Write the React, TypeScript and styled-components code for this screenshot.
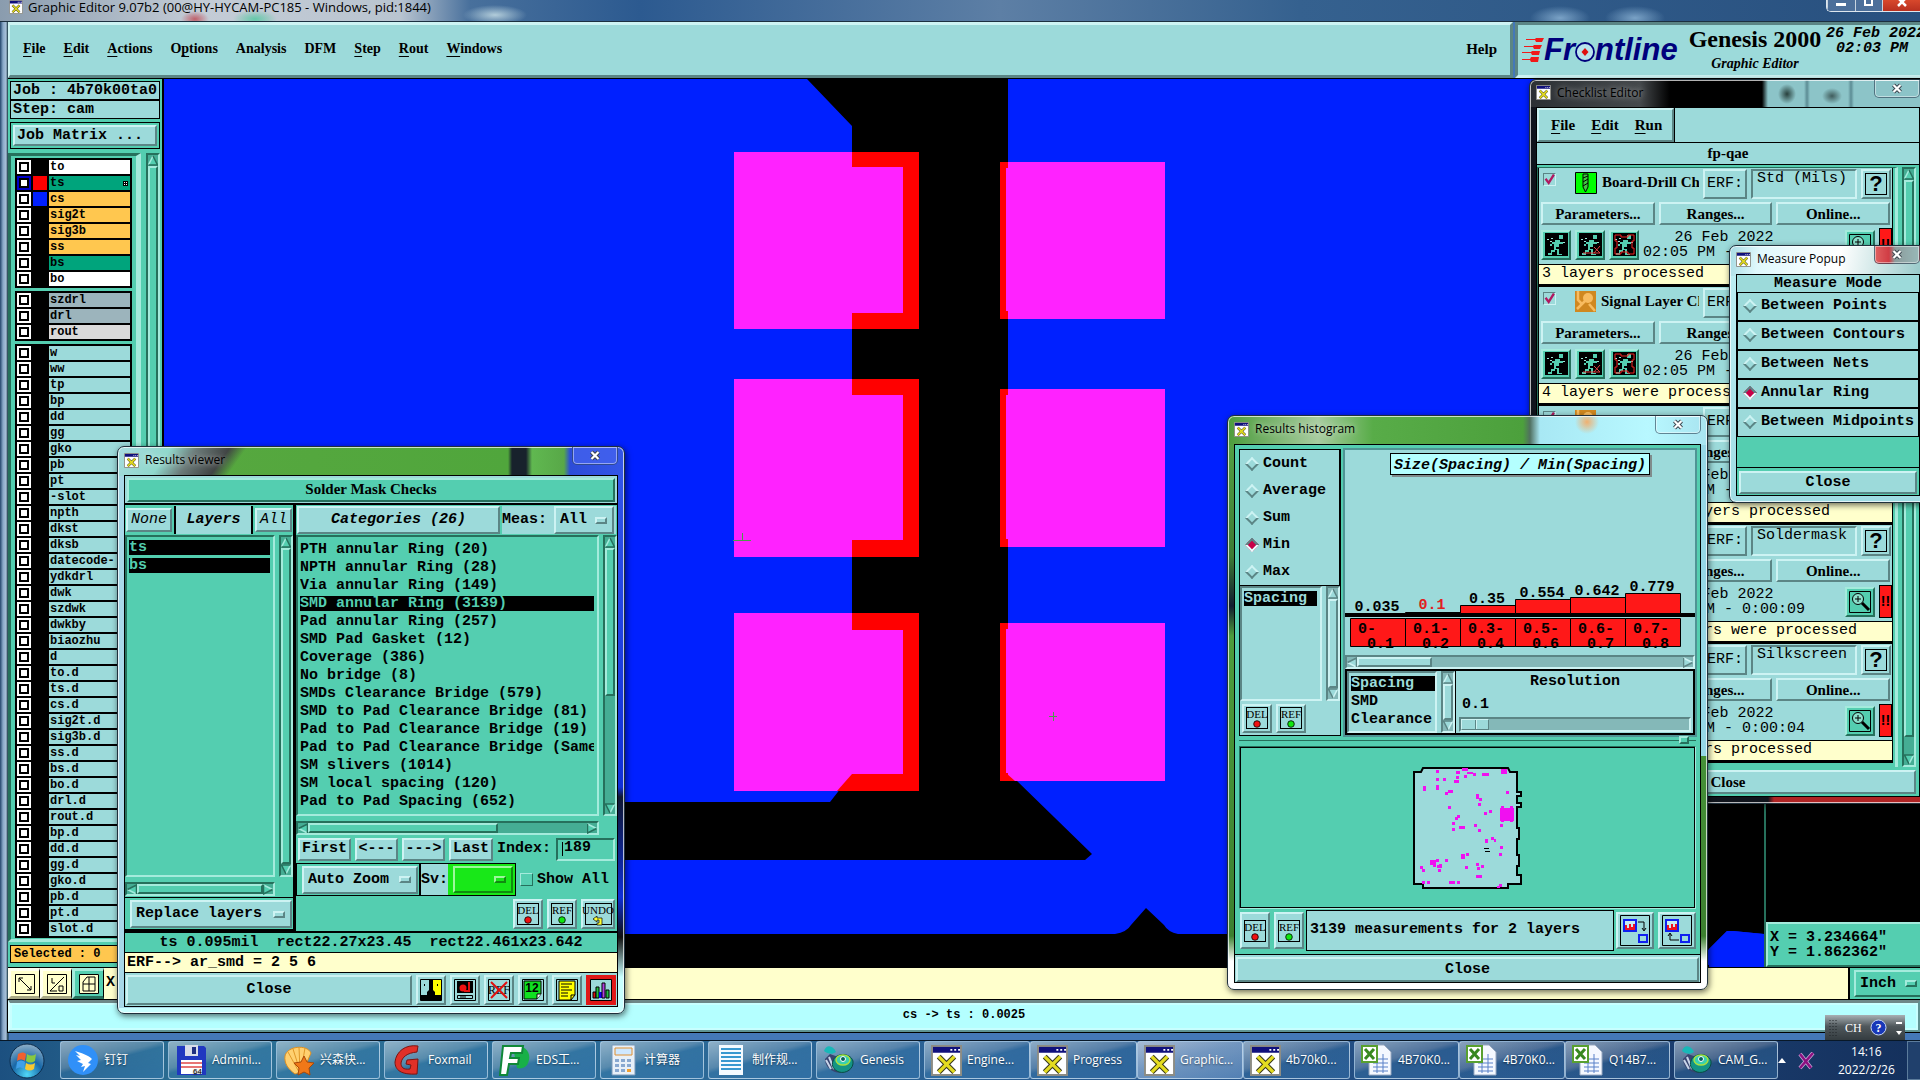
import React from "react";
import styled, { createGlobalStyle, css } from "styled-components";

const MONO = `"Liberation Mono", "Courier New", monospace`;
const SERIF = `"Liberation Serif", "Times New Roman", serif`;
const UI = `"Open Sans", "Noto Sans CJK SC", sans-serif`;

type ToneName = "cyan" | "teal" | "cream" | "green" | "pale";
const tones: Record<ToneName, { bg: string; hi: string; lo: string; trough: string }> = {
  cyan: { bg: "#9cdada", hi: "#cdf3f3", lo: "#5b8585", trough: "#84b8b8" },
  teal: { bg: "#54ceb0", hi: "#a4ebdc", lo: "#26705c", trough: "#45ad94" },
  cream: { bg: "#ffffcc", hi: "#fffff0", lo: "#a8a884", trough: "#d8d8a8" },
  green: { bg: "#18e818", hi: "#9cf89c", lo: "#108c10", trough: "#18c018" },
  pale: { bg: "#b4ffff", hi: "#dcffff", lo: "#5f9494", trough: "#98d8d8" },
};

const raised = (t: ToneName, w = 2) => css`
  background: ${tones[t].bg};
  border: ${w}px solid;
  border-color: ${tones[t].hi} ${tones[t].lo} ${tones[t].lo} ${tones[t].hi};
`;
const sunken = (t: ToneName, w = 2) => css`
  background: ${tones[t].bg};
  border: ${w}px solid;
  border-color: ${tones[t].lo} ${tones[t].hi} ${tones[t].hi} ${tones[t].lo};
`;

const Global = createGlobalStyle`
  *, *::before, *::after { box-sizing: border-box; }
  html, body { margin: 0; padding: 0; overflow: hidden; background: #1d4f86; }
  body { font: bold 15px/18px ${MONO}; color: #000; }
  button, input, select { font: inherit; color: inherit; margin: 0; padding: 0; border-radius: 0; appearance: none; outline: none; }
  ul { list-style: none; margin: 0; padding: 0; }
  h1, h2, p { margin: 0; font: inherit; }
  svg { display: block; flex: none; }
`;

const Desktop = styled.div`
  position: relative;
  height: 100vh;
  display: flex;
  flex-direction: column;
  overflow: hidden;
`;

/* ---------- shared widgets ---------- */
const Btn = styled.button<{ $tone?: ToneName; $w?: number; $h?: number; $italic?: boolean; $serif?: boolean; $plain?: boolean; $grow?: boolean }>`
  ${(p) => raised(p.$tone ?? "cyan")}
  display: flex;
  align-items: center;
  justify-content: center;
  flex: ${(p) => (p.$grow ? "1 1 0" : "none")};
  min-width: 0;
  width: ${(p) => (p.$w ? `${p.$w}px` : "auto")};
  height: ${(p) => (p.$h ? `${p.$h}px` : "auto")};
  font-family: ${(p) => (p.$serif ? SERIF : MONO)};
  font-style: ${(p) => (p.$italic ? "italic" : "normal")};
  font-weight: ${(p) => (p.$plain ? "normal" : "bold")};
  white-space: nowrap;
  overflow: hidden;
`;

const MenuWrap = styled.label<{ $tone: ToneName; $grow?: boolean; $w?: number; $h: number }>`
  ${(p) => raised(p.$tone)}
  display: flex;
  align-items: center;
  gap: 4px;
  padding: 0 5px 0 4px;
  height: ${(p) => p.$h}px;
  width: ${(p) => (p.$w ? `${p.$w}px` : "auto")};
  flex: ${(p) => (p.$grow ? "1 1 0" : "none")};
  select { flex: 1; min-width: 0; border: 0; background: transparent; }
`;
const Tab = styled.span<{ $tone: ToneName }>`
  ${(p) => raised(p.$tone)}
  width: 12px;
  height: 7px;
  flex: none;
`;
const OptionMenu = ({ value, name, tone = "cyan", h, w, grow }: { value: string; name: string; tone?: ToneName; h: number; w?: number; grow?: boolean }) => (
  <MenuWrap $tone={tone} $h={h} $w={w} $grow={grow}>
    <select aria-label={name} defaultValue={value}>
      <option>{value}</option>
    </select>
    <Tab $tone={tone} />
  </MenuWrap>
);

const Track = styled.div<{ $v: boolean; $tone: ToneName }>`
  ${(p) => sunken(p.$tone)}
  background: ${(p) => tones[p.$tone].trough};
  display: flex;
  flex: none;
  flex-direction: ${(p) => (p.$v ? "column" : "row")};
  width: ${(p) => (p.$v ? "14px" : "auto")};
  height: ${(p) => (p.$v ? "auto" : "14px")};
`;
const Rail = styled.div<{ $v: boolean }>`
  flex: 1;
  display: flex;
  flex-direction: ${(p) => (p.$v ? "column" : "row")};
`;
const Thumb = styled.div<{ $size: number; $tone: ToneName }>`
  ${(p) => raised(p.$tone)}
  flex: 0 0 ${(p) => p.$size}%;
`;
const Arrow = ({ turn, tone }: { turn: number; tone: ToneName }) => (
  <svg width="10" height="11" viewBox="0 0 10 11">
    <g transform={`rotate(${turn} 5 5.5)`}>
      <path d="M5 1 9.500 10H.5z" fill={tones[tone].bg} />
      <path d="M.5 10 5 1" stroke={tones[tone].hi} strokeWidth="1.500" />
      <path d="M5 1 9.500 10H.5" fill="none" stroke={tones[tone].lo} strokeWidth="1.500" />
    </g>
  </svg>
);
const Scroll = ({ v = true, size = 100, tone = "teal" }: { v?: boolean; size?: number; tone?: ToneName }) => (
  <Track $v={v} $tone={tone}>
    <Arrow turn={v ? 0 : -90} tone={tone} />
    <Rail $v={v}>
      <Thumb $size={size} $tone={tone} />
    </Rail>
    <Arrow turn={v ? 180 : 90} tone={tone} />
  </Track>
);

const Option = styled.label`
  display: flex;
  align-items: center;
  gap: 4px;
  white-space: nowrap;
`;
const Diamond = styled.input`
  width: 10px;
  height: 10px;
  margin: 0 2px;
  transform: rotate(45deg);
  background: #9cdada;
  border: 2px solid;
  border-color: #cdf3f3 #5b8585 #5b8585 #cdf3f3;
  &:checked { background: #c80048; border-color: #5b8585 #e8ffff #e8ffff #5b8585; }
`;

/* ---------- small drawings ---------- */
const XIcon = ({ s = 15 }: { s?: number }) => (
  <svg width={s} height={s} viewBox="0 0 16 16">
    <path d="M.5.5h15v15H.5z" fill="#fff" stroke="#8c8c84" />
    <path d="M1 1h14v3H1z" fill="#10107c" />
    <path d="M10 2h1v1h-1zM12 2h1v1h-1zM14 2h1v1h-1z" fill="#fff" />
    <path d="m4 6 8 8M12 6l-8 8" stroke="#38381c" strokeWidth="2.800" />
    <path d="m4 6 8 8M12 6l-8 8" stroke="#e4dc20" strokeWidth="1.700" />
  </svg>
);

const GlyphText = styled.span`
  font: 11px/12px ${SERIF};
  height: 12px;
`;
const GlyphFrame = styled.span<{ $wide?: boolean }>`
  display: flex;
  flex-direction: column;
  align-items: center;
  width: ${(p) => (p.$wide ? 27 : 22)}px;
  height: 22px;
  border: 1px solid #000;
`;
const IconBtn = styled(Btn)<{ $mark?: boolean }>`
  ${(p) => p.$mark && css`border-color: #e01818; background: #e01818;`}
  overflow: visible;
`;
const Dot = ({ c }: { c: string }) => (
  <svg width="8" height="8" viewBox="0 0 8 8"><circle cx="4" cy="4" r="3.300" fill={c} stroke="#000" strokeWidth=".8" /></svg>
);
const DelBtn = ({ h = 30 }: { h?: number }) => (
  <IconBtn $w={30} $h={h} aria-label="Delete"><GlyphFrame><GlyphText>DEL</GlyphText><Dot c="#f01010" /></GlyphFrame></IconBtn>
);
const RefBtn = ({ h = 30 }: { h?: number }) => (
  <IconBtn $w={30} $h={h} aria-label="Reference"><GlyphFrame><GlyphText>REF</GlyphText><Dot c="#10e810" /></GlyphFrame></IconBtn>
);

/* ---------- window chrome ---------- */
const Win = styled.section<{ $x: number; $y: number; $w: number; $h: number; $glass: string }>`
  position: absolute;
  left: ${(p) => p.$x}px;
  top: ${(p) => p.$y}px;
  width: ${(p) => p.$w}px;
  height: ${(p) => p.$h}px;
  display: flex;
  flex-direction: column;
  padding: 0 6px 6px;
  border: 1px solid #20303c;
  border-radius: 7px;
  background: ${(p) => p.$glass};
  box-shadow: inset 0 0 0 1px rgba(255, 255, 255, 0.7), 1px 2px 6px rgba(0, 0, 0, 0.6);
`;
const TitleBar = styled.header<{ $h?: number }>`
  display: flex;
  align-items: center;
  gap: 6px;
  height: ${(p) => p.$h ?? 28}px;
  padding-bottom: 2px;
  flex: none;
  font: 12px/16px ${UI};
  h2 { flex: 1; text-shadow: 0 0 6px rgba(255, 255, 255, 0.7); }
`;
const CloseX = styled.button<{ $glass?: string }>`
  align-self: flex-start;
  width: 46px;
  height: 18px;
  border: 1px solid rgba(40, 60, 80, 0.6);
  border-top: 0;
  border-radius: 0 0 5px 5px;
  background: ${(p) => p.$glass ?? "transparent"};
  box-shadow: inset 0 0 0 1px rgba(255, 255, 255, 0.45);
  display: flex;
  align-items: center;
  justify-content: center;
`;
const Cross = () => (
  <svg width="12" height="11" viewBox="0 0 12 11">
    <path d="m2.500 2 7 7M9.500 2l-7 7" stroke="#39424c" strokeWidth="4" />
    <path d="m2.500 2 7 7M9.500 2l-7 7" stroke="#fff" strokeWidth="2.200" />
  </svg>
);
const Client = styled.div<{ $tone?: ToneName }>`
  flex: 1;
  min-height: 0;
  display: flex;
  flex-direction: column;
  background: ${(p) => tones[p.$tone ?? "teal"].bg};
  border: 1px solid #000;
`;
const Chrome = ({ title, closeGlass, h }: { title: string; closeGlass?: string; h?: number }) => (
  <TitleBar $h={h}>
    <XIcon />
    <h2>{title}</h2>
    <CloseX $glass={closeGlass} aria-label={`Close ${title}`}><Cross /></CloseX>
  </TitleBar>
);

/* ---------- main editor ---------- */
const Editor = styled.main`
  flex: 1;
  min-height: 0;
  display: flex;
  flex-direction: column;
  padding: 0 0 8px 8px;
  background: linear-gradient(90deg, #24466c 0, #88a8c8 3px, #a8c0d8 6px, #10303c 8px, #4478b8 9px);
`;
const EditorTitle = styled.header`
  height: 22px;
  margin-left: -8px;
  padding-left: 9px;
  display: flex;
  align-items: flex-start;
  gap: 5px;
  flex: none;
  background:
    radial-gradient(ellipse 14px 8px at 195px 19px, rgba(190, 50, 60, 0.7), transparent),
    radial-gradient(ellipse 22px 9px at 255px 19px, rgba(60, 200, 150, 0.7), transparent),
    radial-gradient(ellipse 32px 10px at 495px 15px, rgba(190, 215, 225, 0.9), transparent),
    radial-gradient(ellipse 30px 12px at 1560px 18px, rgba(130, 170, 205, 0.9), transparent),
    radial-gradient(ellipse 30px 12px at 1635px 18px, rgba(130, 170, 205, 0.9), transparent),
    linear-gradient(90deg, #8a9cae 0, #c4ccd6 200px, #b9c4d0 400px, #48709c 470px, #2c5a90 640px, #5d7fa5 1000px, #35618f 1300px, #28507f 100%);
  border-bottom: 1px solid #1c3040;
  font: 13px/14px ${UI};
  h1 { flex: 1; }
`;
const Caption = styled.div`
  display: flex;
  width: 94px;
  height: 12px;
  border: 1px solid #dde6ee;
  border-top: 0;
  border-right: 0;
  border-radius: 0 0 0 5px;
  overflow: hidden;
`;
const CaptionBtn = styled.button<{ $red?: boolean }>`
  flex: ${(p) => (p.$red ? "0 0 38px" : "1")};
  border: 0;
  border-left: 1px solid #c8d4e0;
  background: ${(p) => (p.$red ? "linear-gradient(#d8482c, #b83020)" : "#4c6f9a")};
  display: flex;
  justify-content: center;
`;
const TopRow = styled.div`
  display: flex;
  height: 57px;
  flex: none;
  border-bottom: 1px solid #000;
`;
const MenuBar = styled.nav`
  ${raised("cyan", 3)}
  flex: 1;
  display: flex;
  align-items: center;
  gap: 18px;
  padding: 0 13px 2px;
  border-left-width: 2px;
`;
const MenuItem = styled.button<{ $end?: boolean; $small?: boolean }>`
  border: 0;
  background: transparent;
  font: bold ${(p) => (p.$small ? 14 : 15)}px/18px ${SERIF};
  margin-left: ${(p) => (p.$end ? "auto" : "0")};
  u { text-underline-offset: 3px; text-decoration-thickness: 1px; }
`;
const Brand = styled.div`
  ${sunken("cyan", 3)}
  width: 405px;
  display: flex;
  padding: 0 0 0 4px;
  margin-left: 2px;
  border-right: 0;
  overflow: hidden;
`;
const Logo = styled.div`
  display: flex;
  align-items: center;
  width: 162px;
  height: 50px;
  flex: none;
  font: italic bold 31px/36px "Liberation Sans", Arial, sans-serif;
  color: #00007c;
`;
const Product = styled.div`
  display: flex;
  flex-direction: column;
  align-items: center;
  gap: 2px;
  width: 142px;
  flex: none;
  font: bold 24px/28px ${SERIF};
  white-space: nowrap;
  small { font: italic bold 14px/18px ${SERIF}; }
`;
const Stamp = styled.div`
  flex: none;
  width: 92px;
  font: italic bold 15px/15px ${MONO};
  text-align: center;
  white-space: pre;
  padding-top: 1px;
`;

const Work = styled.div`
  flex: 1;
  min-height: 0;
  display: flex;
  background: #000;
`;
const Side = styled.aside`
  width: 156px;
  flex: none;
  display: flex;
  flex-direction: column;
  background: #54ceb0;
  border-right: 2px solid #000;
  padding: 2px 2px 0;
`;
const Field = styled.p`
  height: 19px;
  flex: none;
  border: 1px solid #000;
  background: #9cdada;
  padding-left: 2px;
  font-weight: bold;
  line-height: 18px;
  white-space: nowrap;
`;
const MatrixBox = styled.div`
  flex: none;
  margin: 3px 0 4px;
  padding: 2px;
  border: 1px solid #000;
  button { width: 100%; height: 21px; justify-content: flex-start; padding-left: 2px; }
`;
const LayerArea = styled.div`
  flex: 1;
  min-height: 0;
  display: flex;
  justify-content: space-between;
`;
const LayerBox = styled.div`
  ${sunken("teal", 3)}
  border-right-width: 5px;
  width: 133px;
  padding: 2px 0 0 4px;
  margin-left: -2px;
  overflow: hidden;
  display: flex;
  flex-direction: column;
  gap: 3px;
`;
const LayerGroup = styled.ul`
  width: 117px;
  padding: 1px 2px 1px 1px;
  background: #000;
  flex: none;
`;
const LayerRow = styled.li`
  display: flex;
  align-items: center;
  height: 16px;
  gap: 2px;
  padding-left: 1px;
`;
const LayerTick = styled.input<{ $active?: boolean }>`
  width: 14px;
  height: 14px;
  border: 2px solid ${(p) => (p.$active ? "#0000c8" : "#fff")};
  background: #fff;
  box-shadow: inset 0 0 0 2px #000;
`;
const Swatch = styled.span<{ $c: string }>`
  width: 14px;
  height: 14px;
  background: ${(p) => p.$c};
`;
const LayerName = styled.label<{ $c: string }>`
  flex: 1;
  height: 14px;
  padding: 0 2px 0 1px;
  background: ${(p) => p.$c};
  font: bold 12px/14px ${MONO};
  display: flex;
  align-items: center;
  justify-content: space-between;
  white-space: nowrap;
  overflow: hidden;
`;
const Selected = styled.p`
  flex: none;
  margin: 3px 0 4px;
  height: 18px;
  border: 1px solid #000;
  background: #ffc74f;
  padding-left: 3px;
  font: bold 12px/16px ${MONO};
`;
const Viewport = styled.div`
  flex: 1;
  min-width: 0;
  overflow: hidden;
`;
const Coordinates = styled.div`
  width: 156px;
  flex: none;
  border-left: 2px solid #26705c;
  display: flex;
  flex-direction: column;
  justify-content: flex-end;
  p {
    ${raised("teal")}
    border-right: 0;
    height: 45px;
    padding: 6px 0 0 2px;
    font-weight: bold;
    line-height: 15px;
    white-space: pre;
  }
`;
const CommandRow = styled.div`
  display: flex;
  align-items: stretch;
  height: 33px;
  flex: none;
  background: #ffffcc;
  border: solid #000;
  border-width: 1px 0;
`;
const Tool = styled.button<{ $on?: boolean }>`
  ${(p) => raised(p.$on ? "teal" : "cream", 3)}
  width: 32px;
  border-right: 1px solid #000;
  display: flex;
  align-items: center;
  justify-content: center;
  svg { background: #ffffcc; }
`;
const Command = styled.input`
  flex: 1;
  border: 0;
  background: transparent;
`;
const CmdLabel = styled.label`
  padding: 6px 2px;
`;
const Units = styled.div`
  width: 72px;
  padding: 2px 0 2px 4px;
  border-left: 2px solid #000;
  background: #54ceb0;
  overflow: hidden;
  font-weight: bold;
`;
const Status = styled.p`
  ${raised("pale", 2)}
  flex: none;
  height: 32px;
  border-top: 3px solid #6e8888;
  box-shadow: inset 0 0 0 2px #c8ffff;
  font: bold 12px/25px ${MONO};
  text-align: center;
  outline: 1px solid #000;
`;

const boardLayers: [string, string, string?][] = [
  ["to", "#fff"], ["ts", "#00a47c", "#ff0000"], ["cs", "#ffc74f", "#0020ff"], ["sig2t", "#ffc74f"],
  ["sig3b", "#ffc74f"], ["ss", "#ffc74f"], ["bs", "#00a47c"], ["bo", "#fff"],
];
const drillLayers: [string, string][] = [["szdrl", "#9cb4bc"], ["drl", "#9cb4bc"], ["rout", "#dadada"]];
const miscLayers = "w ww tp bp dd gg gko pb pt -slot npth dkst dksb datecode- ydkdrl dwk szdwk dwkby biaozhu d to.d ts.d cs.d sig2t.d sig3b.d ss.d bs.d bo.d drl.d rout.d bp.d dd.d gg.d gko.d pb.d pt.d slot.d"
  .split(" ")
  .map((n): [string, string] => [n, "#9cdada"]);

const Layers = ({ rows }: { rows: [string, string, string?][] }) => (
  <LayerGroup>
    {rows.map(([name, colour, swatch]) => (
      <LayerRow key={name}>
        <LayerTick type="checkbox" id={`layer-${name}`} $active={name === "ts"} />
        <Swatch $c={swatch ?? "#000"} />
        <LayerName htmlFor={`layer-${name}`} $c={colour}>
          {name}
          {name === "ts" && (
            <svg width="5" height="5" viewBox="0 0 5 5"><path d="M0 0h5v5H0z" /><path d="M1 1h1v1H1zM3 1h1v1H3zM1 3h1v1H1zM3 3h1v1H3z" fill="#fff" /></svg>
          )}
        </LayerName>
      </LayerRow>
    ))}
  </LayerGroup>
);

const leftPads = [[152, 167, 313, 329], [379, 395, 540, 557], [613, 630, 774, 791]];
const rightPads = [[162, 319], [389, 547], [623, 781]];
const Artwork = () => (
  <svg width="1600" height="888" viewBox="164 79 1600 888">
    <path d="M164 79h1600v888H164z" fill="#0020ff" />
    <path d="M807 79h201v699h6l78 76-7 6H164v-58h666l22-28V126z" />
    <path d="M164 934h951q12-2 16-9l15-17 18 17q4 7 14 9h531v33H164z" />
    <path d="M1600 800h164v134l-31-3h-6l-20 20v16h-107z" />
    <path d="m1707 951 20-20h6l31 3v31h-57z" fill="#0020ff" />
    {leftPads.map(([a, b, c, d]) => (
      <g key={a}>
        <path d={`M852 ${a}H919V${d}H852z`} fill="#f00" />
        <path d={`M734 ${a}H852V${b}H903V${c}H852V${d}H734z`} fill="#ff22ff" />
      </g>
    ))}
    <path d="M852 774v17h-15z" fill="#f00" />
    {rightPads.map(([a, d]) => (
      <g key={a}>
        <path d={`M1000 ${a}H1165V${d}H1000z`} fill="#ff22ff" />
        <path d={`M1000 ${a}h8v6h-2V${d - 8}h2v8h-8z`} fill="#f00" />
      </g>
    ))}
    <path d="M1006 773l9 8h-9z" fill="#f00" />
    <path d="M733 540.500h18M742.500 533v7M1049 716.500h8M1053.500 712v9" stroke="#4c9a4c" />
  </svg>
);

const LogoMark = () => (
  <svg width="22" height="28" viewBox="0 0 22 28">
    <path d="M22 2h-8l-1 1H4v1h9l1 2h6zM20 9h-8l-1 1H2v1h9l1 2h6zM18 15h-8l-1 1H0v1h9l1 2h7zM17 21H9l-1 2H0v1h8l1 2h7z" fill="#f01818" />
  </svg>
);
const Target = () => (
  <svg width="20" height="26" viewBox="0 0 20 26">
    <circle cx="10" cy="15" r="9" fill="#b8e4ec" stroke="#00007c" strokeWidth="1.800" />
    <path d="m10 11 3.500 4-3.500 4-3.500-4z" fill="#e01010" />
  </svg>
);

const menus: [string, string, string][] = [
  ["", "F", "ile"], ["", "E", "dit"], ["", "A", "ctions"], ["O", "p", "tions"], ["Analysis", "", ""],
  ["DFM", "", ""], ["", "S", "tep"], ["", "R", "out"], ["", "W", "indows"],
];

const GraphicEditor = () => (
  <Editor>
    <EditorTitle>
      <XIcon s={14} />
      <h1>Graphic Editor 9.07b2 (00@HY-HYCAM-PC185 - Windows, pid:1844)</h1>
      <Caption>
        <CaptionBtn aria-label="Minimize"><svg width="12" height="8"><path d="M1 3h10v3H1z" fill="#fff" /></svg></CaptionBtn>
        <CaptionBtn aria-label="Maximize"><svg width="11" height="8"><path d="M2-2h7v7H2z" fill="none" stroke="#fff" strokeWidth="2" /></svg></CaptionBtn>
        <CaptionBtn $red aria-label="Close"><svg width="10" height="8"><path d="m1-2 8 8M9-2 1 6" stroke="#fff" strokeWidth="2.500" /></svg></CaptionBtn>
      </Caption>
    </EditorTitle>
    <TopRow>
      <MenuBar>
        {menus.map(([a, b, c]) => (
          <MenuItem $small key={a + b + c}>{a}{b && <u>{b}</u>}{c}</MenuItem>
        ))}
        <MenuItem $end>Help</MenuItem>
      </MenuBar>
      <Brand>
        <Logo><LogoMark />Fr<Target />ntline</Logo>
        <Product>Genesis 2000<small>Graphic Editor</small></Product>
        <Stamp>{"26 Feb 2022\n02:03 PM"}</Stamp>
      </Brand>
    </TopRow>
    <Work>
      <Side>
        <Field>Job : 4b70k00ta0</Field>
        <Field>Step: cam</Field>
        <MatrixBox><Btn>Job Matrix ...</Btn></MatrixBox>
        <LayerArea>
          <LayerBox>
            <Layers rows={boardLayers} />
            <Layers rows={drillLayers} />
            <Layers rows={miscLayers} />
          </LayerBox>
          <Scroll />
        </LayerArea>
        <Selected>Selected : 0</Selected>
      </Side>
      <Viewport><Artwork /></Viewport>
      <Coordinates><p>{'X = 3.234664"\nY = 1.862362"'}</p></Coordinates>
    </Work>
    <CommandRow>
      <Tool aria-label="Zoom area"><svg width="20" height="20" viewBox="0 0 20 20"><path d="M.5.5h19v19H.5zM4 4l12 12M4 8V4h4M12 16h4v-4" fill="none" stroke="#000" /></svg></Tool>
      <Tool aria-label="Angle"><svg width="20" height="20" viewBox="0 0 20 20"><path d="M.5.5h19v19H.5zM3 17 17 3M3 17h7M5 4v5h3M12 12h4v5h-4z" fill="none" stroke="#000" /></svg></Tool>
      <Tool $on aria-label="Grid"><svg width="20" height="20" viewBox="0 0 20 20"><path d="M.5.5h19v19H.5zM8 3h8v14H4V8zM4 10h12M10 3v14" fill="none" stroke="#000" /></svg></Tool>
      <CmdLabel htmlFor="xy">X</CmdLabel>
      <Command id="xy" />
      <Units><OptionMenu name="Units" value="Inch" tone="teal" h={27} w={70} /></Units>
    </CommandRow>
    <Status>cs -&gt; ts : 0.0025</Status>
  </Editor>
);

/* ---------- checklist editor ---------- */
const ChkMenu = styled.nav`
  ${raised("cyan")}
  display: flex;
  align-items: center;
  gap: 16px;
  width: 137px;
  height: 34px;
  padding-left: 12px;
  outline: 1px solid #000;
`;
const ChkHead = styled.div`
  background: #9cdada;
  border-bottom: 1px solid #000;
`;
const ChkName = styled.h2`
  height: 22px;
  text-align: center;
  border-top: 1px solid #000;
  font: bold 15px/20px ${SERIF};
`;
const ChkBody = styled.div`
  flex: 1;
  min-height: 0;
  display: flex;
  gap: 4px;
  margin-top: 2px;
  padding-right: 3px;
`;
const ChkList = styled.div`
  flex: 1;
  min-width: 0;
  border: solid #26705c;
  border-width: 1px 0 0 1px;
  border-right: 3px solid #a4ebdc;
  padding-right: 2px;
  overflow: hidden;
`;
const Check = styled.article`
  height: 119px;
  background: #9cdada;
  border: 1px solid #000;
  border-width: 0 1px 3px 1px;
  display: flex;
  flex-direction: column;
  font-weight: normal;
`;
const CheckTop = styled.div`
  display: flex;
  height: 34px;
  padding: 1px 1px 3px 4px;
  gap: 4px;
`;
const CheckTitle = styled.label`
  flex: 1;
  min-width: 0;
  display: flex;
  align-items: flex-start;
  overflow: hidden;
  white-space: nowrap;
  font: bold 15px/26px ${SERIF};
  svg { margin: 3px 5px 0 15px; }
`;
const Pick = styled.input`
  ${sunken("cyan", 1)}
  width: 13px;
  height: 13px;
  margin-top: 4px;
  flex: none;
  background: #9cdada url("data:image/svg+xml,%3Csvg xmlns='http://www.w3.org/2000/svg' viewBox='0 0 12 12'%3E%3Cpath d='M2 5l3 4 5-8' fill='none' stroke='%23b01860' stroke-width='2.200'/%3E%3C/svg%3E") center / 12px no-repeat;
`;
const ErfInput = styled.input`
  ${sunken("cyan")}
  width: 106px;
  flex: none;
  padding: 0 0 11px 4px;
  line-height: 16px;
`;
const Triple = styled.div`
  display: flex;
  gap: 4px;
  height: 23px;
  padding: 0 2px;
  flex: none;
  button { flex: 1; }
`;
const RunRow = styled.div`
  display: flex;
  align-items: center;
  gap: 4px;
  flex: 1;
  padding-left: 2px;
  p { flex: 1; text-align: center; line-height: 15px; white-space: pre; font-weight: normal; }
`;
const Alert = styled.span`
  width: 16px;
  height: 33px;
  background: #ff1818;
  border: 1px solid #000;
  text-align: center;
  font: bold 14px/30px "Liberation Sans", sans-serif;
`;
const Message = styled.p`
  flex: none;
  height: 20px;
  padding-left: 3px;
  border-top: 1px solid #000;
  background: #ffffcc;
  font-weight: normal;
  white-space: nowrap;
`;
const ChkFoot = styled.div`
  height: 29px;
  padding: 3px 3px 2px;
  display: flex;
  flex: none;
`;
const Runner = ({ mark }: { mark?: "edit" | "frame" }) => (
  <svg width="23" height="23" viewBox="0 0 23 23">
    <path d="M0 0h23v23H0z" />
    <path d="M14 2h4v4h-4zM10 7h5v2h3v2h-4v3h-3v2h3v5h3v1h-5v-5h-2v2H7v3H3v-2h3v-3h3V11H7v2H5v-2h2V9h3z" fill="#54ceb0" />
    <path d="M2 6h2v1H2zM5 8h2v1H5zM6 5h2v1H6zM18 9h2v1h-2z" fill="#9ce8d8" />
    {mark === "edit" && <path d="m15 20 6-7M15 14l6 6M4 20h17" fill="none" stroke="#e04040" />}
    {mark === "frame" && <path d="M2 2h6v2h7V2h6v6h-2v7h2v6h-6v-2H8v2H2v-6h2V8H2z" fill="none" stroke="#f02020" />}
  </svg>
);
const Lens = () => (
  <svg width="22" height="22" viewBox="0 0 22 22">
    <path d="M.5.5h21v21H.5z" fill="#54ceb0" stroke="#000" />
    <circle cx="9" cy="8" r="5.500" fill="#8ce0cc" stroke="#000" />
    <path d="M9 5v6M6 8h6" stroke="#000" />
    <path d="m13 12 7 7" stroke="#000" strokeWidth="3" />
  </svg>
);
const DrillArt = () => (
  <svg width="22" height="22" viewBox="0 0 22 22"><path d="M.5.5h21v21H.5z" fill="#0f0" stroke="#000" /><path d="M8 2h5v13l-2.500 5L8 15z" fill="#40c840" stroke="#000" /><path d="m8 6 5-2M8 10l5-3M8 14l5-3" stroke="#000" /></svg>
);
const CopperArt = () => (
  <svg width="21" height="21" viewBox="0 0 21 21"><path d="M0 0h21v21H0z" fill="#d08820" /><circle cx="13" cy="7" r="5" fill="#f8bc60" /><path d="M10 10 2 18M3 0v9l4 4M14 13l6 7" fill="none" stroke="#f8bc60" strokeWidth="2.500" /></svg>
);
const checks = [
  { name: "Board-Drill Checks", erf: "Std (Mils)", time: "0:00:07", msg: "3 layers processed", art: <DrillArt /> },
  { name: "Signal Layer Checks", erf: "Outer", time: "0:00:12", msg: "4 layers were processed", art: <CopperArt /> },
  { name: "Power/Ground Checks", erf: "Inner", time: "0:00:05", msg: "No power/ground layers processed", art: <CopperArt /> },
  { name: "Solder Mask Checks", erf: "Soldermask", time: "0:00:09", msg: "2 solder mask layers were processed", art: <CopperArt /> },
  { name: "Silk Screen Checks", erf: "Silkscreen", time: "0:00:04", msg: "2 silk screen layers processed", art: <CopperArt /> },
];
const QMark = styled.span`
  width: 22px;
  height: 22px;
  border: 1px solid #000;
  font: bold 22px/20px "Liberation Sans", sans-serif;
`;
const Checklist = () => (
  <Win $x={1529} $y={79} $w={398} $h={725} $glass="radial-gradient(ellipse 9px 10px at 257px 14px, #28403c, transparent), radial-gradient(ellipse 10px 8px at 302px 16px, #405c5c, transparent), linear-gradient(90deg, #2c3034 0, #45494c 110px, #000 140px, #000 232px, #8cc4c8 238px, #8cc4c8 274px, #5c8c94 277px, #8cc4c8 280px, #8cc4c8 318px, #5c8c94 321px, #8cc4c8 324px, #8cc4c8 100%) 0 0 / 100% 27px no-repeat, linear-gradient(90deg, #10141c 238px, #b02424 244px)">
    <Chrome title="Checklist Editor" h={27} />
    <Client>
      <ChkHead>
        <ChkMenu>
          <MenuItem><u>F</u>ile</MenuItem><MenuItem><u>E</u>dit</MenuItem><MenuItem><u>R</u>un</MenuItem>
        </ChkMenu>
        <ChkName>fp-qae</ChkName>
      </ChkHead>
      <ChkBody>
        <ChkList>
          {checks.map((c, i) => (
            <Check key={c.name}>
              <CheckTop>
                <Pick type="checkbox" id={`check-${i}`} />
                <CheckTitle htmlFor={`check-${i}`}>{c.art}{c.name}</CheckTitle>
                <Btn $w={44} $plain>ERF:</Btn>
                <ErfInput aria-label={`${c.name} ERF`} defaultValue={c.erf} />
                <Btn $w={30} aria-label="Help"><QMark>?</QMark></Btn>
              </CheckTop>
              <Triple><Btn $serif>Parameters...</Btn><Btn $serif>Ranges...</Btn><Btn $serif>Online...</Btn></Triple>
              <RunRow>
                <Btn $tone="teal" $w={30} $h={30} aria-label="Run"><Runner /></Btn>
                <Btn $tone="teal" $w={30} $h={30} aria-label="Run edited"><Runner mark="edit" /></Btn>
                <Btn $tone="teal" $w={30} $h={30} aria-label="Run area"><Runner mark="frame" /></Btn>
                <p>{`26 Feb 2022    \n02:05 PM - ${c.time}    `}</p>
                <Btn $tone="teal" $w={30} $h={30} aria-label="Inspect"><Lens /></Btn>
                <Alert>!!</Alert>
              </RunRow>
              <Message>{c.msg}</Message>
            </Check>
          ))}
        </ChkList>
        <Scroll size={97} />
      </ChkBody>
      <ChkFoot><Btn $serif $grow>Close</Btn></ChkFoot>
    </Client>
  </Win>
);

/* ---------- measure popup ---------- */
const ModeHead = styled.h2`
  height: 17px;
  line-height: 17px;
  text-align: center;
  background: #9cdada;
  font-weight: bold;
`;
const Modes = styled.div`
  label {
    height: 29px;
    padding: 0 0 2px 5px;
    background: #9cdada;
    border: 1px solid #000;
  }
`;
const PopFoot = styled.div`
  margin-top: auto;
  display: flex;
  padding: 3px 2px 1px;
  height: 28px;
  border-top: 1px solid #000;
`;
const MeasurePopup = () => (
  <Win $x={1729} $y={245} $w={198} $h={258} $glass="linear-gradient(100deg, #a8dce4 0, #dff8fc 30px, #fff 110px, #9ccccc 190px) 0 0 / 100% 30px no-repeat, linear-gradient(#c0f0f4, #a0dce4)">
    <Chrome title="Measure Popup" closeGlass="linear-gradient(90deg, #e06060, #d03c44 14px, #8c9c9c 20px, #98b8b8)" />
    <Client>
      <ModeHead>Measure Mode</ModeHead>
      <Modes>
        {["Between Points", "Between Contours", "Between Nets", "Annular Ring", "Between Midpoints"].map((m) => (
          <Option key={m}><Diamond type="radio" name="mode" defaultChecked={m === "Annular Ring"} />{m}</Option>
        ))}
      </Modes>
      <PopFoot><Btn $grow>Close</Btn></PopFoot>
    </Client>
  </Win>
);

/* ---------- results viewer ---------- */
const Heading = styled.h2`
  flex: none;
  height: 29px;
  padding: 2px;
  background: #9cdada;
  border-bottom: 2px solid #000;
  span { ${raised("teal")} display: block; height: 24px; text-align: center; font: bold 15px/19px ${SERIF}; }
`;
const Split = styled.div`
  flex: 1;
  min-height: 0;
  display: flex;
`;
const LayerPane = styled.div`
  width: 171px;
  flex: none;
  display: flex;
  flex-direction: column;
  border-right: 3px solid #000;
`;
const ResultPane = styled.div`
  flex: 1;
  min-width: 0;
  display: flex;
  flex-direction: column;
`;
const HeadRow = styled.div`
  display: flex;
  align-items: center;
  gap: 2px;
  height: 30px;
  padding: 1px;
  flex: none;
`;
const LayerCaption = styled.h2`
  flex: 1;
  height: 100%;
  background: #9cdada;
  border: solid #000;
  border-width: 0 2px;
  text-align: center;
  font-style: italic;
  font-weight: bold;
  line-height: 28px;
`;
const MeasCell = styled.div`
  display: flex;
  align-items: center;
  justify-content: space-between;
  width: 114px;
  height: 28px;
  padding-right: 2px;
  background: #9cdada;
`;
const Lists = styled.div`
  flex: 1;
  min-height: 0;
  display: flex;
  gap: 4px;
`;
const ListBox = styled.ul<{ $tone?: ToneName; $pad?: number }>`
  ${(p) => sunken(p.$tone ?? "teal")}
  flex: 1;
  min-width: 0;
  padding: ${(p) => p.$pad ?? 2}px 3px 0 2px;
  overflow: hidden;
`;
const Row = styled.li<{ $on?: boolean; $tone?: ToneName }>`
  height: 18px;
  white-space: nowrap;
  overflow: hidden;
  font-weight: bold;
  line-height: 16px;
  border: solid ${(p) => tones[p.$tone ?? "teal"].bg};
  border-width: 1px 0 2px;
  color: ${(p) => (p.$on ? tones[p.$tone ?? "teal"].bg : "#000")};
  background: ${(p) => (p.$on ? "#000" : "transparent")};
`;
const HWrap = styled.div`
  margin: 5px 18px 1px 0;
`;
const MenuRow = styled.div`
  border: 1px solid #000;
  border-width: 1px 0 2px;
  padding: 2px 1px 1px 5px;
`;
const Line = styled.div<{ $h: number; $end?: boolean }>`
  display: flex;
  align-items: center;
  justify-content: ${(p) => (p.$end ? "flex-end" : "flex-start")};
  gap: 4px;
  height: ${(p) => p.$h}px;
  padding: 0 2px;
  flex: none;
  font-weight: bold;
`;
const IndexInput = styled.input`
  ${sunken("teal")}
  flex: 1;
  min-width: 0;
  height: 23px;
  margin-left: 1px;
  padding: 0 0 3px 6px;
  background: #54ceb0 linear-gradient(#000, #000) 4px 2px / 1px 14px no-repeat;
`;
const Boxed = styled.div<{ $green?: boolean }>`
  display: flex;
  align-items: center;
  height: 33px;
  border: 1px solid #000;
  background: ${(p) => (p.$green ? "#18e818" : "transparent")};
  padding: ${(p) => (p.$green ? "0 2px 0 0" : "0 1px 0 5px")};
`;
const BoxPair = styled.div`
  display: flex;
  margin-left: -2px;
`;
const SvLabel = styled.span`
  background: #9cdada;
  line-height: 31px;
  width: 27px;
  margin-right: 5px;
`;
const ShowTick = styled.input`
  ${raised("teal", 1)}
  width: 13px;
  height: 13px;
`;
const Info = styled.p<{ $cream?: boolean }>`
  flex: none;
  height: 21px;
  line-height: 20px;
  font-weight: bold;
  white-space: pre;
  border-top: ${(p) => (p.$cream ? 1 : 2)}px solid #000;
  border-bottom: ${(p) => (p.$cream ? 1 : 0)}px solid #000;
  background: ${(p) => (p.$cream ? "#ffffcc" : "#54ceb0")};
  text-align: ${(p) => (p.$cream ? "left" : "center")};
  padding: 0 2px;
`;
const Foot = styled.div`
  flex: none;
  display: flex;
  gap: 4px;
  height: 33px;
  padding: 2px 1px 1px;
  background: #9cdada;
`;
const categories = [
  "PTH annular Ring (20)", "NPTH annular Ring (28)", "Via annular Ring (149)", "SMD annular Ring (3139)",
  "Pad annular Ring (257)", "SMD Pad Gasket (12)", "Coverage (386)", "No bridge (8)", "SMDs Clearance Bridge (579)",
  "SMD to Pad Clearance Bridge (81)", "Pad to Pad Clearance Bridge (19)", "Pad to Pad Clearance Bridge (Same",
  "SM slivers (1014)", "SM local spacing (120)", "Pad to Pad Spacing (652)",
];
const footArt: [string, React.ReactNode][] = [
  ["Snapshot", <><path d="M1 1h11v20H1z" fill="#9cdada" /><path d="M12 1h9v20h-9z" fill="#ff0" /><path d="M9 0h4v11l2 2v3h6v5H1v-5h6v-3l2-2zM4 5h1v2H4zM17 5h1v2h-1z" /></>],
  ["Light table", <><path d="M3 2h16v12H3z" /><path d="M15 3v9h-5" stroke="#e01010" strokeWidth="2" fill="none" /><circle cx="9" cy="9" r="3.500" fill="#f01010" /><path d="M3.500 16.500h15v3h-15zM6 18h6" fill="#9cdada" stroke="#000" /></>],
  ["Clear reference", <><text x="11" y="15" fontSize="12" textAnchor="middle" fontFamily="Liberation Serif" fontWeight="normal">REF</text><path d="m3 3 16 16M19 3 3 19" stroke="#e01010" strokeWidth="2" /></>],
  ["Numbers", <><path d="M2 2h17v13l-4 5H2z" fill="#10e020" stroke="#000" /><path d="M19 15h-4v5" fill="#fff" stroke="#000" /><text x="10" y="13" fontSize="12" textAnchor="middle" fontFamily="Liberation Sans" fontWeight="bold">12</text></>],
  ["Report", <><path d="M3 2h16v14l-4 5H3z" fill="#ff0" stroke="#000" /><path d="M5 5h11M5 8h8M5 11h11M5 14h7M5 17h7M19 16h-4v5" fill="none" stroke="#000" /></>],
  ["Histogram", <><path d="M3 13h3v6H3z" fill="#e01010" stroke="#000" /><path d="M6 8h3v11H6zM16 11h3v8h-3z" fill="#20c040" stroke="#000" /><path d="M9 13h3v6H9z" fill="#10e" /><path d="M12 4h3v15h-3z" fill="#b040e0" stroke="#000" /></>],
];
const ResultsViewer = () => (
  <Win $x={117} $y={446} $w={508} $h={568} $glass="linear-gradient(125deg, #a8dce0 0, #90d8cc 44px, #6b7a78 66px, #404444 92px, rgba(0,0,0,0) 106px) 0 0 / 100% 29px no-repeat, linear-gradient(90deg, #58a840 0, #50a63c 390px, #18222c 394px, #18222c 408px, #60b850 414px, #58a848 446px, #2c4cd8 452px, #3355e8 100%) 0 0 / 100% 29px no-repeat, linear-gradient(90deg, #a8d8e8 0, #a8d8e8 300px, rgba(0,0,0,0) 300px) 0 0 / 100% 561px no-repeat, linear-gradient(#3458ec 0, #1030d8 340px, #101830 350px, #1030d8 450px, #101010 490px, #c8ffff 530px)">
    <Chrome title="Results viewer" closeGlass="rgba(70,100,240,.7)" />
    <Client>
      <Heading><span>Solder Mask Checks</span></Heading>
      <Split>
        <LayerPane>
          <HeadRow>
            <Btn $italic $plain $w={46} $h={24}>None</Btn>
            <LayerCaption>Layers</LayerCaption>
            <Btn $italic $plain $w={37} $h={24}>All</Btn>
          </HeadRow>
          <Lists>
            <ListBox><Row $on>ts</Row><Row $on>bs</Row></ListBox>
            <Scroll />
          </Lists>
          <HWrap><Scroll v={false} /></HWrap>
          <MenuRow><OptionMenu name="Layer mode" value="Replace layers" h={28} /></MenuRow>
        </LayerPane>
        <ResultPane>
          <HeadRow>
            <Btn $italic $grow $h={28}>Categories (26)</Btn>
            <MeasCell>Meas:<OptionMenu name="Meas" value="All" h={28} w={60} /></MeasCell>
          </HeadRow>
          <Lists>
            <ListBox $pad={4}>
              {categories.map((c, i) => <Row key={c} $on={i === 3}>{c}</Row>)}
            </ListBox>
            <Scroll size={58} />
          </Lists>
          <HWrap><Scroll v={false} size={68} /></HWrap>
          <Line $h={26}>
            <Btn $w={53} $h={23}>First</Btn>
            <Btn $w={43} $h={23}>&lt;---</Btn>
            <Btn $w={43} $h={23}>---&gt;</Btn>
            <Btn $w={44} $h={23}>Last</Btn>
            <label htmlFor="index">Index:</label>
            <IndexInput id="index" defaultValue="189" />
          </Line>
          <Line $h={35}>
            <BoxPair>
              <Boxed><OptionMenu name="Zoom" value="Auto Zoom" h={28} w={116} /></Boxed>
              <Boxed $green><SvLabel>Sv:</SvLabel><OptionMenu name="Severity" value="" tone="green" h={27} w={60} /></Boxed>
            </BoxPair>
            <Option><ShowTick type="checkbox" />Show All</Option>
          </Line>
          <Line $h={34} $end>
            <DelBtn /><RefBtn />
            <IconBtn $w={34} $h={30} aria-label="Undo">
              <GlyphFrame $wide><GlyphText>UNDO</GlyphText>
                <svg width="12" height="10" viewBox="0 0 12 10"><path d="M5 0 1 3l4 3V4h2v3H5v2h5V2H5z" fill="#ff3" stroke="#000" strokeWidth=".7" /></svg>
              </GlyphFrame>
            </IconBtn>
          </Line>
        </ResultPane>
      </Split>
      <Info>ts 0.095mil  rect22.27x23.45  rect22.461x23.642</Info>
      <Info $cream>{"ERF--> ar_smd = 2 5 6"}</Info>
      <Foot>
        <Btn $grow>Close</Btn>
        {footArt.map(([n, art]) => (
          <IconBtn key={n} $w={30} aria-label={n} $mark={n === "Histogram"}>
            <svg width="22" height="22" viewBox="0 0 22 22"><path d="M.5.5h21v21H.5z" fill="#9cdada" stroke="#000" />{art}</svg>
          </IconBtn>
        ))}
      </Foot>
    </Client>
  </Win>
);

/* ---------- histogram ---------- */
const HistBody = styled.div`
  flex: 1;
  min-height: 0;
  display: flex;
  flex-direction: column;
  padding: 4px 4px 2px;
`;
const HistTop = styled.div`
  display: flex;
  gap: 3px;
  height: 287px;
  flex: none;
`;
const StatPane = styled.div`
  width: 102px;
  flex: none;
  display: flex;
  flex-direction: column;
  border: 1px solid #000;
  background: #9cdada;
`;
const Stats = styled.div`
  height: 136px;
  border-bottom: 1px solid #000;
  border-right: 1px solid #000;
  padding: 0 5px;
  label { height: 27px; }
`;
const ChartPane = styled.div`
  flex: 1;
  min-width: 0;
  display: flex;
  flex-direction: column;
  align-items: stretch;
  border: 1px solid #000;
  outline: 2px solid #4f9494;
  outline-offset: -1px;
  background: #9cdada;
`;
const ChartTitle = styled.h2`
  align-self: center;
  width: 260px;
  height: 22px;
  margin-top: 3px;
  border: 1px solid #000;
  background: #b4ffff;
  box-shadow: 2px 2px 0 #808c8c;
  text-align: center;
  font-style: italic;
  font-weight: bold;
  line-height: 24px;
`;
const ChartFoot = styled.div`
  flex: 1;
  display: flex;
  border: 2px solid #000;
`;
const Filter = styled.div`
  display: flex;
  gap: 4px;
  width: 109px;
  flex: none;
  border-right: 1px solid #000;
`;
const FilterList = styled(ListBox)`
  padding-right: 0;
`;
const Resolution = styled.div`
  flex: 1;
  padding: 2px 2px 1px 3px;
  display: flex;
  flex-direction: column;
  font-weight: bold;
  label { text-align: center; }
  output { margin-top: 5px; padding-left: 3px; }
`;
const Slider = styled.input`
  ${sunken("cyan")}
  background: #84b8b8;
  width: 100%;
  height: 15px;
  margin-top: auto;
  &::-webkit-slider-thumb {
    appearance: none;
    width: 28px;
    height: 11px;
    background: linear-gradient(90deg, transparent 13px, #5b8585 13px, #5b8585 14px, #cdf3f3 14px, #cdf3f3 15px, transparent 15px) #9cdada;
    border: 1px solid;
    border-color: #cdf3f3 #5b8585 #5b8585 #cdf3f3;
  }
`;
const Sash = styled.div`
  height: 10px;
  flex: none;
  display: flex;
  justify-content: flex-end;
  padding-right: 7px;
  background: linear-gradient(#26705c, #26705c) 0 4px / 100% 1px no-repeat;
  span { ${raised("teal")} width: 10px; height: 8px; }
`;
const MapPane = styled.div`
  ${sunken("teal")}
  flex: 1;
  outline: 1px solid #000;
  outline-offset: -2px;
  display: flex;
  align-items: center;
  justify-content: center;
`;
const MapRow = styled.div`
  display: flex;
  align-items: center;
  gap: 4px;
  height: 43px;
  flex: none;
  padding-left: 1px;
  p { flex: 1; height: 41px; margin: 0 -2px; border: 1px solid #000; background: #9cdada; padding-left: 3px; line-height: 38px; font-weight: bold; }
`;
const HistFoot = styled.div`
  display: flex;
  height: 28px;
  flex: none;
  border-top: 1px solid #000;
  padding: 2px 1px 0;
  background: #9cdada;
`;
const bars: [string, string, string, number][] = [
  ["0.035", "0-", "0.1", 0], ["0.1", "0.1-", "0.2", 1], ["0.35", "0.3-", "0.4", 8],
  ["0.554", "0.5-", "0.6", 14], ["0.642", "0.6-", "0.7", 16], ["0.779", "0.7-", "0.8", 20],
];
const Chart = () => (
  <svg width="350" height="180" viewBox="1344 476 350 180" fontFamily="Liberation Mono" fontSize="15" fontWeight="bold">
    <path d="M1344 614h350v4h-350z" />
    {bars.map(([v, a, b, h], i) => {
      const x = 1349 + i * 55;
      return (
        <g key={v}>
          {h > 0 && <path d={`M${x + 0.5} ${614.5 - h}h55v${h}h-55z`} fill="#ff1818" stroke="#000" />}
          <path d={`M${x + 0.5} 619.500h55v28h-55z`} fill="#ff1818" stroke="#000" />
          <text x={x + 27} y={v === "0.1" ? 610 : 612 - h} textAnchor="middle" fill={v === "0.1" ? "#e02020" : "#000"}>{v}</text>
          <text x={x + 8} y="634">{a}</text>
          <text x={x + 17} y="649">{b}</text>
        </g>
      );
    })}
  </svg>
);
const specks: [number, number, number, number][] = [
  [22, 3, 3, 3], [48, 1, 6, 3], [42, 4, 4, 3], [53, 5, 6, 2], [59, 6, 3, 3], [68, 6, 7, 3], [87, 2, 6, 5], [42, 9, 3, 3], [50, 8, 3, 3],
  [22, 11, 3, 3], [29, 11, 3, 3], [40, 13, 5, 3], [22, 18, 3, 5], [9, 19, 3, 5], [31, 25, 3, 3], [34, 23, 5, 3], [92, 24, 3, 3],
  [62, 27, 3, 5], [65, 31, 3, 3], [64, 36, 3, 3], [34, 39, 3, 3], [75, 43, 3, 3], [70, 45, 3, 3], [43, 48, 3, 3], [41, 50, 3, 3],
  [38, 55, 3, 3], [38, 61, 3, 3], [45, 59, 6, 3], [60, 57, 3, 3], [64, 62, 3, 3], [86, 41, 14, 13], [87, 39, 3, 16], [96, 39, 3, 16], [86, 57, 3, 3], [71, 72, 3, 4],
  [77, 70, 3, 3], [80, 72, 2, 3], [86, 79, 3, 3], [85, 86, 3, 3], [52, 86, 3, 3], [47, 87, 4, 5], [31, 92, 3, 3], [16, 93, 6, 5],
  [22, 92, 3, 3], [19, 97, 3, 3], [23, 98, 3, 3], [25, 97, 3, 4], [6, 99, 3, 3], [8, 102, 3, 3], [24, 102, 3, 3], [62, 96, 3, 3],
  [67, 98, 3, 3], [51, 99, 3, 3], [63, 100, 3, 3], [62, 108, 6, 3], [8, 114, 3, 3], [13, 114, 3, 3], [35, 114, 6, 3], [43, 114, 3, 3],
  [85, 117, 3, 3], [83, 119, 3, 2],
];
const BoardMap = () => (
  <svg width="110" height="122" viewBox="0 0 110 122">
    <path d="M10 1h85l2 4h7v20h4v4h-4v7h4v4h-4v21h2v11h-2v16h2v11h-2v9h4v9h-13v4H10v-4H1V5h7z" fill="#9cdada" stroke="#000" strokeWidth="2" />
    <path d={specks.map(([x, y, w, h]) => `M${x + 1} ${y}h${w}v${h}h-${w}z`).join("")} fill="#f010f0" />
    <path d="M71 81.500h5M72 84.500h5" stroke="#000" />
  </svg>
);
const MapIcon = ({ back }: { back?: boolean }) => (
  <svg width="30" height="31" viewBox="0 0 30 31">
    <path d="M.5.5h29v30H.5z" fill="#9cdada" stroke="#000" />
    <path d="M4 5h12v11H4z" fill="#f01020" stroke="#1020f0" strokeWidth="2" />
    <path d="M5 6h10v3h-2v3h-2V9H9v4H7v-3H5z" fill="#c8ecf0" />
    <path d="M19 20h8v7h-8z" fill="none" stroke="#1020f0" strokeWidth="2" />
    {back ? <path d="M17 25H8v-6m-2 2 2-3 2 3" fill="none" stroke="#000" /> : <path d="M18 7h6v8m-2-2 2 3 2-3" fill="none" stroke="#000" />}
  </svg>
);
const Histogram = () => (
  <Win $x={1227} $y={415} $w={481} $h={575} $glass="radial-gradient(ellipse 12px 12px at 359px 6px, #f0b070, transparent), linear-gradient(90deg, #4c9c3c 0, #a8cca0 90px, #58ac48 145px, #4ca03c 295px, #507060 302px, #a8e8f4 312px, #b8f8ff 420px, #a8e4f0 100%) 0 0 / 100% 29px no-repeat, linear-gradient(90deg, rgba(0,0,0,0) 240px, rgba(150,215,230,1) 240px) 0 0 / 100% 340px no-repeat, linear-gradient(#58a848 0, #3c7c34 140px, #101c30 190px, #4c9c3c 220px, #3c8030 520px, #fff 545px)">
    <Chrome title="Results histogram" />
    <Client>
      <HistBody>
        <HistTop>
          <StatPane>
            <Stats>
              {["Count", "Average", "Sum", "Min", "Max"].map((s) => (
                <Option key={s}><Diamond type="radio" name="stat" defaultChecked={s === "Min"} />{s}</Option>
              ))}
            </Stats>
            <Lists>
              <ListBox $tone="cyan" $pad={2}><Row $on $tone="cyan">Spacing</Row></ListBox>
              <Scroll tone="cyan" />
            </Lists>
            <Line $h={34}><DelBtn h={29} /><RefBtn h={29} /></Line>
          </StatPane>
          <ChartPane>
            <ChartTitle>Size(Spacing) / Min(Spacing)</ChartTitle>
            <Chart />
            <Scroll v={false} size={23} tone="cyan" />
            <ChartFoot>
              <Filter>
                <FilterList $tone="cyan" $pad={2}>
                  <Row $on $tone="cyan">Spacing</Row><Row $tone="cyan">SMD</Row><Row $tone="cyan">Clearance</Row>
                </FilterList>
                <Scroll tone="cyan" />
              </Filter>
              <Resolution>
                <label htmlFor="resolution">Resolution</label>
                <output htmlFor="resolution">0.1</output>
                <Slider id="resolution" type="range" defaultValue={0} />
              </Resolution>
            </ChartFoot>
          </ChartPane>
        </HistTop>
        <Sash><span /></Sash>
        <MapPane><BoardMap /></MapPane>
        <MapRow>
          <DelBtn h={37} /><RefBtn h={37} />
          <p>3139 measurements for 2 layers</p>
          <IconBtn $w={38} $h={37} aria-label="Copy to chart"><MapIcon /></IconBtn>
          <IconBtn $w={38} $h={37} aria-label="Copy from chart"><MapIcon back /></IconBtn>
        </MapRow>
      </HistBody>
      <HistFoot><Btn $grow>Close</Btn></HistFoot>
    </Client>
  </Win>
);

/* ---------- taskbar ---------- */
const Bar = styled.footer`
  flex: none;
  height: 40px;
  display: flex;
  align-items: stretch;
  border-top: 1px solid #081828;
  padding-left: 9px;
  color: #fff;
  font: 12px/16px ${UI};
  background: linear-gradient(90deg, #1c5080 0, #2c7094 200px, #2c6c98 600px, #2a5f94 1000px, #20477c 1500px, #14305c 100%);
`;
const Start = styled.button`
  width: 36px;
  height: 37px;
  margin: 1px 15px 0 0;
  border: 0;
  background: transparent;
`;
const Tasks = styled.div`
  display: flex;
  gap: 4px;
`;
const Group = styled.div`
  display: flex;
`;
const Task = styled.button<{ $on?: boolean; $w: number }>`
  width: ${(p) => p.$w}px;
  height: 38px;
  display: flex;
  align-items: center;
  gap: 5px;
  padding: 0 2px 0 6px;
  border: 1px solid rgba(200, 225, 245, 0.65);
  border-radius: 3px;
  white-space: nowrap;
  text-shadow: 0 1px 2px rgba(0, 0, 0, 0.5);
  background: ${(p) =>
    p.$on
      ? "linear-gradient(165deg, rgba(235,240,250,.65), rgba(190,215,245,.5) 45%, rgba(120,165,215,.55))"
      : "linear-gradient(165deg, rgba(225,235,240,.55) 0, rgba(190,210,225,.3) 42%, rgba(70,140,190,.28) 50%, rgba(60,130,190,.35))"};
`;
const Tray = styled.div`
  flex: 1;
  display: flex;
  align-items: center;
  justify-content: flex-end;
  gap: 12px;
  time { text-align: center; line-height: 18px; margin: 0 0 0 10px; white-space: pre; }
`;
const Peek = styled.button`
  width: 14px;
  align-self: stretch;
  border: 1px solid #5c7c9c;
  background: #20406c;
`;
const LangBar = styled.div`
  position: absolute;
  right: 15px;
  bottom: 40px;
  width: 80px;
  height: 25px;
  display: flex;
  align-items: center;
  gap: 8px;
  padding-left: 4px;
  color: #fff;
  background: linear-gradient(#a8b0b4, #50585c 45%, #343c40);
  font: 12px/16px ${SERIF};
`;
const art: Record<string, React.ReactNode> = {
  ding: <><circle cx="16" cy="16" r="15" fill="#3090f8" /><path d="M8 7c6 2 13 4 17 8l-4 4 3 1-8 8 2-6-4 1 2-3-6-3 4-1-5-5 4 1z" fill="#fff" /></>,
  floppy: <><path d="M2 2h27l2 2v27H2z" fill="#2038c0" /><path d="M10 1h13v11H10z" fill="#d8dce8" /><path d="M17 3h4v7h-4z" fill="#203080" /><path d="M6 16h21v14H6z" fill="#fff" /><path d="M6 19h21M6 23h21" stroke="#e04848" strokeWidth="1.500" /><text x="18" y="30" fontSize="8" fontFamily="Liberation Sans" fill="#000">64</text></>,
  shell: <><path d="M2 12C4 2 24 0 28 9l-8 18-8 3c-7-5-11-11-10-18z" fill="#ffd070" stroke="#e09020" /><path d="M5 8l11 20M10 5l7 22M16 3l1 24M22 4l-4 23" stroke="#e09828" /><path d="m21 12 3 6 7 1-5 5 1 7-6-3-6 3 1-7-5-5 7-1z" fill="#f07818" stroke="#a84808" /></>,
  fox: <path d="M27 2C14 0 5 8 4 18c0 8 6 13 22 12l1-15-11 1-1 4 5 1-1 4c-7 1-9-2-9-6 1-6 6-10 16-11z" fill="#e03028" stroke="#7c1410" />,
  eds: <><path d="M14 3c10-3 18 4 16 13s-9 9-12 8z" fill="#18b048" /><path d="M4 2h20l-1 7H12l-1 5h9l-1 6h-9L8 31H1z" fill="#fff" stroke="#108838" strokeWidth="2" /></>,
  calc: <><path d="M5 1h23v30H5z" fill="#e8f0f8" stroke="#7898b8" /><path d="M8 4h17v7H8z" fill="#cfe8ff" stroke="#e09030" /><path d="M8 15h4v3H8zM14 15h4v3h-4zM20 15h4v3h-4zM8 20h4v3H8zM14 20h4v3h-4zM20 20h4v3h-4zM8 25h4v3H8zM14 25h4v3h-4z" fill="#88a8d0" /><path d="M20 25h4v3h-4z" fill="#f0a030" /></>,
  note: <><path d="M4 1h24v30H4z" fill="#f4faff" /><path d="M6 5h20M6 9h20M6 13h20M6 17h20M6 21h20M6 25h20" stroke="#3898d0" strokeWidth="2" /></>,
  eye: <><path d="m2 15 5-5 11 4 10 6c-2 7-9 10-16 8C6 26 2 21 2 15z" fill="#384470" /><path d="m3 16 5 9M6 13l5 12" stroke="#c8d4e8" strokeWidth="2" /><path d="M10 17c2-8 17-9 20 0 1 8-7 13-14 11-5-2-8-6-6-11z" fill="#149484" stroke="#084c44" /><ellipse cx="20" cy="16" rx="7" ry="5" fill="#38d0b0" stroke="#a8e040" strokeWidth="1.500" /><circle cx="20" cy="15" r="2.500" fill="#086058" stroke="#fff" /><path d="M1 7C3 0 10 1 13 8c-4 3-8 2-12-1z" fill="#18b8b8" /></>,
  excel: <><path d="M8 1h15l7 7v23H8z" fill="#f4f8ff" stroke="#98a8c0" /><path d="M12 15h15M12 19h15M12 23h15M12 27h15M16 12v17M22 10v19" stroke="#5880c8" /><path d="M1 2h15v16H1z" fill="#fff" stroke="#58a030" strokeWidth="2" /><path d="m4 5 9 10M13 5 4 15" stroke="#388820" strokeWidth="3" /></>,
};
const TaskIcon = ({ kind }: { kind: string }) =>
  kind === "x" ? <XIcon s={31} /> : <svg width="32" height="32" viewBox="0 0 32 32">{art[kind]}</svg>;
const tasks: [string, string][][] = [
  [["ding", "钉钉"]], [["floppy", "Admini..."]], [["shell", "兴森快..."]], [["fox", "Foxmail"]], [["eds", "EDS工..."]],
  [["calc", "计算器"]], [["note", "制作规..."]], [["eye", "Genesis"]],
  [["x", "Engine..."], ["x", "Progress"], ["x", "Graphic..."], ["x", "4b70k0..."]],
  [["excel", "4B70K0..."], ["excel", "4B70K0..."], ["excel", "Q14B7..."]], [["eye", "CAM_G..."]],
];
const Taskbar = () => (
  <Bar>
    <Start aria-label="Start">
      <svg width="36" height="36" viewBox="0 0 36 36">
        <defs><radialGradient id="orb" cx=".5" cy=".9" r=".9"><stop offset="0" stopColor="#50d8f8" /><stop offset=".5" stopColor="#1868a8" /><stop offset="1" stopColor="#90b0c8" /></radialGradient></defs>
        <circle cx="18" cy="18" r="17" fill="url(#orb)" stroke="#0c2c4c" />
        <path d="M9 11c3-2 6-2 8 0l-1 7c-3-2-5-2-8 0z" fill="#f06030" />
        <path d="M18 11c3 2 6 2 9 0l-1 7c-3 2-6 2-9 0z" fill="#88c840" />
        <path d="M8 19c3-2 5-2 8 0l-1 7c-3-2-5-2-8 0z" fill="#40a0e8" />
        <path d="M17 20c3 2 6 2 9 0l-1 6c-3 2-6 2-9 0z" fill="#f8c830" />
      </svg>
    </Start>
    <Tasks>
      {tasks.map((g, i) => (
        <Group key={i}>
          {g.map(([kind, name], j) => (
            <Task key={j} $w={g.length > 1 ? (j % 2 ? 106 : 105) + (g.length === 4 ? 1 : 0) : 104} $on={name === "Graphic..."}>
              <TaskIcon kind={kind} />{name}
            </Task>
          ))}
        </Group>
      ))}
    </Tasks>
    <Tray>
      <svg width="8" height="5"><path d="M4 0 8 5H0z" fill="#fff" /></svg>
      <svg width="18" height="18" viewBox="0 0 18 18"><path d="m2 2 11 14M15 1 2 16" stroke="#c8a8d8" strokeWidth="4" /><path d="m2 2 11 14M15 1 2 16" stroke="#8c1080" strokeWidth="2.500" /></svg>
      <time>{"14:16\n2022/2/26"}</time>
      <Peek aria-label="Show desktop" />
    </Tray>
  </Bar>
);

export default function App() {
  return (
    <Desktop>
      <Global />
      <GraphicEditor />
      <Checklist />
      <Histogram />
      <ResultsViewer />
      <MeasurePopup />
      <Taskbar />
      <LangBar>
        <svg width="8" height="18"><path d="M1 1v17M4 1v17M7 1v17" stroke="#202428" strokeDasharray="1 2" /></svg>
        CH
        <svg width="17" height="17" viewBox="0 0 17 17"><circle cx="8.500" cy="8.500" r="7.500" fill="#1838b8" stroke="#c8d8f8" /><text x="8.500" y="13" fontSize="12" fontWeight="bold" textAnchor="middle" fill="#fff">?</text></svg>
        <svg width="8" height="14"><path d="M1 1h6v2H1zM1 10h6l-3 4z" fill="#fff" /></svg>
      </LangBar>
    </Desktop>
  );
}
